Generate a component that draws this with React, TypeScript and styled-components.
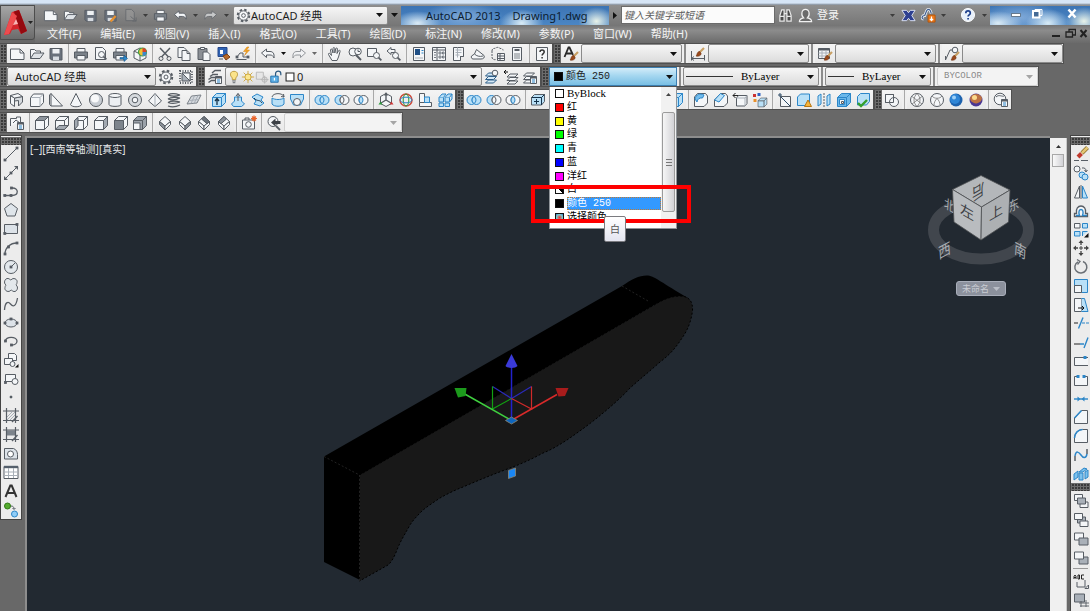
import React from 'react';
import styled, { createGlobalStyle, css } from 'styled-components';

const UI = '"Noto Sans", "Noto Sans CJK SC", sans-serif';
const MONO = '"Liberation Mono", "Noto Sans CJK SC", monospace';
const SERIF = '"Liberation Serif", "Noto Sans CJK SC", serif';

const Global = createGlobalStyle`
  *, *::before, *::after { box-sizing: border-box; }
  html, body { margin: 0; height: 100%; }
  body { background: #686868; font: 11px/16px ${UI}; color: #1c1c1c; overflow: hidden; }
  button, select, input { font: inherit; color: inherit; margin: 0; padding: 0; border: 0; background: none; }
  ul { list-style: none; margin: 0; padding: 0; }
`;

/* ---------- icon artwork, drawn on a 16 x 16 grid ---------- */

const DK = '#575d64';
const LT = '#f4f6f8';
const MID = '#a9b0b8';
const BL = '#2c86c8';
const SKY = '#b9e0f7';
const OR = '#e8902c';

const Brush = () => (
  <g>
    <path d="M15 6l-4.500 4.500" stroke="#c9a064" strokeWidth="2.200" />
    <path d="M10.800 9.500c-2 0-2.500 1.500-3 3.200-.2.800-.8 1.300-.8 1.300 2 .5 4.600.2 5.200-2.200z" fill="#9a4a1c" stroke="#6e3010" strokeWidth=".6" />
  </g>
);
const Mag = ({ x = 10, y = 10, r = 3 }: { x?: number; y?: number; r?: number }) => (
  <g>
    <circle cx={x} cy={y} r={r} fill={LT} />
    <path d={`M${x + r * 0.7} ${y + r * 0.7}l2.800 2.800`} strokeWidth="1.800" />
  </g>
);
const Printer = () => (
  <g>
    <path d="M4 6V2.500h8V6" fill={LT} />
    <path d="M1.500 6h13v6h-13z" fill="#7b828a" />
    <path d="M4 9.500h8v4.500H4z" fill={LT} />
  </g>
);
const Disk = () => (
  <g>
    <path d="M2 2.500h12v11.500H3.500L2 12.500z" fill="#69717c" />
    <path d="M4.500 3h7v4.500h-7z" fill="#eef1f4" stroke="none" />
    <path d="M5 10.500h6V14H5z" fill="#d7dce2" stroke="none" />
  </g>
);
const Layers = ({ f = LT, s = DK }: { f?: string; s?: string }) => (
  <g fill={f} stroke={s}>
    <path d="M1.500 14l3-3h8l-3 3z" />
    <path d="M1.500 10.500l3-3h8l-3 3z" />
    <path d="M1.500 7l3-3h8l-3 3z" />
  </g>
);
const Panel = () => (
  <g>
    <path d="M8.500 7.500h6v7h-6z" fill={LT} />
    <path d="M8.500 8.500h6" strokeWidth="2" />
    <path d="M10 11h3M10 13h3" stroke={BL} />
  </g>
);
const Cube = ({ c = LT, s = DK, front, top, side, left, bottom }: { c?: string; s?: string; front?: string; top?: string; side?: string; left?: string; bottom?: string }) => (
  <g stroke={s} strokeLinejoin="round">
    <path d="M1.500 5.500h9v9h-9z" fill={front || c} />
    <path d="M1.500 5.500l4-4h9l-4 4z" fill={top || c} />
    <path d="M10.500 5.500l4-4v9l-4 4z" fill={side || c} />
    {left && <path d="M1.500 5.500l3.500-3v8l-3.500 4z" fill={left} />}
    {bottom && <path d="M1.500 14.500l3.500-4h9l-3.500 4z" fill={bottom} />}
  </g>
);
const Rings = ({ a, b, m }: { a: string; b: string; m: string }) => (
  <g>
    <circle cx="5.500" cy="8" r="4.500" fill={a} stroke={a === LT ? DK : BL} />
    <circle cx="10.500" cy="8" r="4.500" fill={b} stroke={b === LT ? DK : BL} />
    <path d="M8 4.300c2.600 2 2.600 5.400 0 7.400-2.600-2-2.600-5.400 0-7.400z" fill={m} stroke={m === LT ? DK : BL} />
  </g>
);
const Iso = ({ l, r, t }: { l: string; r: string; t: string }) => (
  <g strokeLinejoin="round">
    <path d="M8 1.500l5.500 5L8 11 2.500 6.500z" fill={t} />
    <path d="M2.500 6.500L8 11v4L2.500 9.500z" fill={l} />
    <path d="M13.500 6.500L8 11v4l5.500-5.500z" fill={r} />
  </g>
);
const Node = ({ x, y }: { x: number; y: number }) => <rect x={x - 1} y={y - 1} width="2" height="2" fill={DK} strokeWidth=".8" />;
const Frame = ({ children }: { children: React.ReactNode }) => (
  <g>
    {children}
    <path d="M3.500 0v15M12.500 0v15M0 3h16M0 12.500h16" strokeWidth="1.200" />
    <path d="M9 14l5.500-6" strokeWidth="1.400" />
  </g>
);

const art: Record<string, React.ReactNode> = {
  new: <g><path d="M1.500 3h9.500l4 4v6.500H1.500z" fill={LT} /><path d="M11 3v4h4" /></g>,
  open: <g><path d="M1.500 12.500v-9h4l1.500 1.500h4.500v2" fill={LT} /><path d="M1.500 12.500L5 7h10l-4 5.500z" fill="#dfe3e7" /></g>,
  save: <Disk />,
  saveas: <g><Disk /><path d="M8 14.500l5.500-6" stroke={OR} strokeWidth="2.400" /></g>,
  web: <g><path d="M3 1.500h6l3 3v9H3z" fill="#9b9b9b" /><path d="M8 9l6 5M14 10v4h-4" /></g>,
  print: <Printer />,
  preview: <g><path d="M2.500 1.500h7l3 3v9h-10z" fill={LT} /><Mag x={8.500} y={8.500} /></g>,
  publish: <g><Printer /><path d="M8 12.500h4v-2.500l3.500 3.500-3.500 3v-2.500H8z" fill={BL} stroke="#14568a" strokeWidth=".6" transform="translate(0 -1)" /></g>,
  dwf: <g><path d="M2 5l6-3 6 3v7l-6 3-6-3z" fill={LT} /><path d="M2 5l6 3v7" /><circle cx="10.500" cy="6" r="4" fill="#f2c230" stroke="#3da04a" strokeWidth="1.200" /><path d="M10.500 6V2a4 4 0 0 1 4 4z" fill="#d8432c" stroke="none" /><path d="M10.500 6h4a4 4 0 0 1-4 4z" fill="#3b87cf" stroke="none" /></g>,
  cut: <g><path d="M3 2l8.500 9M13 2L4.500 11" strokeWidth="1.500" /><circle cx="4" cy="12.500" r="2" /><circle cx="12" cy="12.500" r="2" /></g>,
  copy: <g><path d="M2 1.500h6l2 2v8H2z" fill={LT} /><path d="M6 4.500h5l3 3v7H6z" fill={LT} /><path d="M11 4.500v3h3" /></g>,
  paste: <g><path d="M2 2.500h9v11H2z" fill="#8b8f95" /><path d="M4.500 1.500h4v2h-4z" fill={LT} /><path d="M7 6h4.500l2.500 2.500v6H7z" fill={LT} /></g>,
  match: <g><path d="M2 1.500h9v9H2z" fill="#2f63b4" stroke="#24468a" /><path d="M4 4h3v4H4z" fill="#fff" stroke="none" /><path d="M7 10l3 4 4-3-3-3z" fill="#b86a2b" stroke="#7c3f12" /><path d="M3 13h4" /></g>,
  blockedit: <g><path d="M1.500 13.500h10M2 11l3-4h3v4h5" /><Node x={2} y={11} /><Node x={13} y={11} /><path d="M12 1L8.500 5.500h3L9.500 9.500l5-5.500h-3L14 1z" fill="#f5a623" stroke="#d07e10" strokeWidth=".5" /></g>,
  undo: <path d="M1.500 7L6.500 3v2.500h3.500c3 0 4.500 2 4 6.500-.8-2.200-2-3-4-3H6.500v2.500z" fill={LT} strokeLinejoin="round" />,
  redo: <path d="M14.500 7l-5-4v2.500H6c-3 0-4.500 2-4 6.500.8-2.200 2-3 4-3h3.500v2.500z" fill={LT} strokeLinejoin="round" />,
  pan: <path d="M5 14.500L1.500 8.500c-.5-1.200 1-1.800 1.700-.6L4.500 9.500 3.500 4c0-1.200 1.500-1.300 1.800 0L6 7V2.500c0-1.300 1.700-1.300 1.800 0V7l.9-4.200c.3-1.200 1.800-1 1.700.2L10 7.500l1.500-2.800c.6-1 1.900-.4 1.600.7L11.500 11l-1.500 3.500z" fill={LT} />,
  zoomrt: <g><circle cx="6" cy="6" r="4" fill={LT} /><path d="M9 9l5 5" strokeWidth="2" /><circle cx="11" cy="5.500" r="3.300" fill={LT} /><path d="M11 3.500v2h2" /></g>,
  zoomwin: <g><path d="M1.500 2.500h9v8h-9z" fill={LT} /><Mag x={10.500} y={9.500} r={3} /></g>,
  zoomprev: <g><path d="M1 5l4-3.500v2h4v3H5v2z" fill={LT} /><Mag x={9.500} y={9.500} r={3} /></g>,
  properties: <g><path d="M2.500 1.500h11v13h-11z" fill={LT} /><path d="M4 3h5v6H4z" fill="#1f4f86" stroke="none" /><path d="M10.500 4.500h2M10.500 7h2" stroke={BL} /><path d="M4 12h8" stroke={MID} /></g>,
  dcenter: <g><path d="M1.500 1.500h13v13h-13z" fill={LT} /><path d="M6 1.500v13M1.500 4h13" /><path d="M3 6.500h2M3 9h2M3 11.500h2M8 6h2v2H8zM11.500 6h1.500v2h-1.500zM8 10h2v2H8zM11.500 10h1.500v2h-1.500z" strokeWidth=".8" /></g>,
  palettes: <g><path d="M3.500 1.500h10v9h-3v4h-7z" fill={LT} /><path d="M5.500 4h6M5.500 6.500h6M5.500 9h4M7.500 1.500v10" stroke={MID} /><path d="M13.500 10.500h-3v4" /></g>,
  sheets: <g><path d="M1.500 10l3-2 2-4.500L14 9.500c1 2-.5 3.500-3 3.500H3c-1.500 0-2-2-1.500-3z" fill={LT} /><path d="M4.500 8c2 2 5 3 8.500 2" /></g>,
  markup: <g><path d="M2 5c0-2 1.500-3 3-2.500C6.500 1 9 1 10 2.500c2-.5 3.500 1 3 3" strokeDasharray="2 1" /><path d="M2 5v6c0 2 1.500 3 4 2.500" strokeDasharray="2 1" /><path d="M7.500 7.500h7v7h-7z" fill={LT} /><path d="M7.500 10h7M7.500 12.500h7M10 7.500v7" /></g>,
  calc: <g><path d="M3.500 1.500h9v13h-9z" fill={LT} /><path d="M5.500 4h5" strokeWidth="2" /><path d="M5.500 8h5M5.500 10h5M5.500 12h5" strokeDasharray="1 1" strokeWidth="1.400" /></g>,
  help: <g><path d="M2.500 1.500h11v13h-11z" fill={LT} /><path d="M6 6c0-2.600 4.200-2.600 4.200 0 0 1.600-2.100 1.600-2.100 3.600M8.100 11v1.500" strokeWidth="1.500" stroke="#333" /></g>,
  textstyle: <g><path d="M1.500 11L5.500 1.500h1L10 9M3 7.500h5.500" stroke="#2a2a2a" strokeWidth="1.800" /><Brush /></g>,
  dimstyle: <g><path d="M1.500 5v9.500M14.500 9v5.500M1.500 12.500h13M4 10.500l-2.500 2L4 14.500" /><g transform="translate(-1 -4)"><Brush /></g></g>,
  tablestyle: <g><path d="M1.500 2.500h11v10h-11z" fill={LT} /><path d="M1.500 3.500h11" strokeWidth="2" /><path d="M1.500 7h11M1.500 10h11M5 4v8M9 4v8" stroke={MID} /><Brush /></g>,
  leaderstyle: <g><path d="M1.500 14V10M1.500 14L6 4h3" /><circle cx="11" cy="4" r="2.800" fill={LT} /><Brush /></g>,
  gear: <g><circle cx="8" cy="8" r="6.200" strokeDasharray="2.600 2.270" strokeWidth="2" /><circle cx="8" cy="8" r="5" fill={LT} /><circle cx="8" cy="8" r="2" /></g>,
  wssave: <g><path d="M2 2h12v12H2z" strokeDasharray="1 1.500" strokeWidth="2" /><path d="M4 4h8v8H4z" fill={MID} /><path d="M4 4l8 8V4z" fill={LT} /></g>,
  layerprops: <g><path d="M5 4l3-2.500h6M3 7.500l3-2h5M1.500 10.500l3-2h4M1.500 13.500l3-2h4" strokeWidth="1.400" /><Panel /></g>,
  bulb: <g><path d="M8 1.500c5 0 5 5 2 7.500v2H6V9C3 6.500 3 1.500 8 1.500z" fill="#fbe38a" stroke="#b79538" /><path d="M6 12.500h4M6.500 14.500h3" /></g>,
  sun: <g stroke="#c9a134"><path d="M8 1v14M1 8h14M3 3l10 10M13 3L3 13" /><circle cx="8" cy="8" r="3.500" fill="#fbe68f" /></g>,
  freeze: <g stroke="#b5b5b5"><path d="M1.500 2.500h8v8h-8z" fill="#e6e6e6" /><circle cx="11" cy="11" r="3" fill="#dadada" /><path d="M11 6.500v9M6.500 11h9" /></g>,
  lock: <g><path d="M7.500 7V4c0-3.500 6-3.500 6 0v2" stroke="#2d5a80" strokeWidth="1.400" /><path d="M2 7h8.500v7H2z" fill="#63b3e8" stroke="#1c6ca8" /><path d="M6.200 9v3" stroke="#fff" strokeWidth="1.400" /></g>,
  swatch: <path d="M3.500 3.500h9v9h-9z" fill="#fff" stroke="#222" strokeWidth="1.200" />,
  laycur: <g><Layers s="#2f5f88" f="#d5e9f7" /><circle cx="11" cy="4" r="2.800" fill={LT} /></g>,
  layprev: <g><g transform="translate(2.500 1)"><Layers /></g><path d="M5 3H1M3 1L1 3l2 2" stroke="#111" /></g>,
  laystate: <g><Layers /><Panel /></g>,
  polysolid: <g strokeLinejoin="round"><path d="M1.500 3.500l4 2.500v8.500l-4-3z" fill={LT} /><path d="M5.500 6l8-1.500V10l-4 4V8.500l-4 .5z" fill="#d6dade" /><path d="M1.500 3.500L9 1.500l4.500 3L5.500 6z" fill={LT} /></g>,
  box: <g strokeLinejoin="round"><path d="M1.500 5.500l3-3.500h10v8.500l-3.500 4H1.500z" fill={LT} /><path d="M1.500 5.500h9.500v9M11 5.500L14.500 2" stroke={MID} /></g>,
  wedge: <g><path d="M3 1.500L14.500 14H3z" fill={LT} /><path d="M3 1.500L1.500 3v9.500L3 14" /></g>,
  cone: <path d="M8 1.500l5.500 11c-1 3-10 3-11 0z" fill={LT} strokeLinejoin="round" />,
  sphere: <g><circle cx="8" cy="8" r="6.500" fill="#c8cdd3" /><circle cx="7" cy="6.500" r="4" fill="#f8f9fa" stroke="none" /></g>,
  cyl: <g><path d="M2 3.500v9c0 2.500 12 2.500 12 0v-9" fill="#eceff2" /><ellipse cx="8" cy="3.500" rx="6" ry="2" fill={LT} /></g>,
  torus: <g><circle cx="8" cy="8" r="6.500" fill="#d6dade" /><circle cx="8" cy="8" r="2.800" fill={LT} /></g>,
  pyramid: <g strokeLinejoin="round"><path d="M8 1.500L1.500 9 8 14.500 14.500 9z" fill={LT} /><path d="M8 1.500v13" stroke={MID} /></g>,
  helix: <path d="M2 3c3-2 9-1 12 0M2 3c4 1.500 8 1.500 12 0M2 7c3-2 9-2 12-1M2 7c4 1.500 8 1 12-1M2 10.500c3-2 9-1.500 12-.5M2 10.500c4 1.500 8 1 12-.5M2 14c4 1.500 8 1 12-1" strokeWidth="1.300" />,
  planar: <g stroke="#7b8188"><path d="M1 12L5.500 4 15 3l-4 8z" fill="#d5d9de" /><path d="M3.500 8.500L13 7.500M8.500 3.800L5 11.500M12 3.500l-4 8" stroke={MID} /></g>,
  extrude: <g><Cube c={SKY} s={BL} /><path d="M6 13V7M4 9l2-2.500L8 9" stroke="#14324a" strokeWidth="1.300" /></g>,
  presspull: <g><path d="M1.500 12l3-3V5h7v4l3 3-3 2.500h-8z" fill={SKY} stroke={BL} /><path d="M8 9V1.500M6 4l2-2.500L10 4" /></g>,
  sweep: <g><path d="M2 5l5-3 6 3-2 3 3 3-4 3-6-2 2-3z" fill={SKY} stroke={BL} /><path d="M4 6c3 4 6 1 8 5" stroke="#14324a" /></g>,
  revolve: <g><path d="M2 6v6c2 3 10 3 12 0V6c-3 2-9 2-12 0z" fill={SKY} stroke={BL} /><path d="M2 5c1-4.500 11-4.500 12 0M14 5l-.5-3M14 5l-3-.5" /></g>,
  loft: <g><path d="M1.500 2.500h13V7l-3 6h-7l-3-6z" fill={SKY} stroke={BL} /><circle cx="8" cy="10" r="3.500" fill={LT} /></g>,
  union: <Rings a={SKY} b={SKY} m={SKY} />,
  subtract: <Rings a={SKY} b={LT} m={LT} />,
  intersect: <Rings a={LT} b={LT} m={SKY} />,
  move3d: <g><path d="M8 1.500l5.500 3v7L8 14.500l-5.500-3v-7z" fill={LT} /><path d="M8 8V2M8 8l5 3M8 8l-5 3" strokeWidth="1.400" /><path d="M8 0L6 3.500h4z" fill={DK} stroke="none" /><path d="M15.500 12.500l-4 0 2-3z" fill="#c33" stroke="none" /><path d="M.5 12.500l4 0-2-3z" fill="#2a9a3a" stroke="none" /></g>,
  rotate3d: <g><circle cx="8" cy="8" r="6" stroke="#d04a3a" strokeWidth="1.500" /><ellipse cx="8" cy="8" rx="2.800" ry="6" stroke="#2a9a3a" /><ellipse cx="8" cy="8" rx="6" ry="2.800" stroke={BL} /></g>,
  align3d: <g><path d="M2.500 1.500h5v9h-5z" fill={LT} /><path d="M2.500 10.500h12v4h-12z" fill={LT} /><path d="M7.500 5h5v5.500h-5z" fill={SKY} stroke={BL} /></g>,
  array3d: <g><path d="M2 5.500h4.500V10H2zM8 5.500h4.500V10H8zM2 11h4.500v3.500H2zM8 11h4.500v3.500H8z" fill={SKY} stroke={BL} /><path d="M2 5.500l3-3.500h4L6.500 5.500M8 5.500L11 2h4l-2.500 3.500M12.500 10L15 7V2" fill={SKY} stroke={BL} /></g>,
  faceext: <g><path d="M1.500 5.500l3-3h10v7l-3 3.500h-10z" fill={SKY} stroke={DK} /><path d="M1.500 5.500h10v7.500M11.500 5.500l3-3M6.500 7v5M4 9.500h5" stroke="#14324a" /></g>,
  imprint: <g><Cube c={SKY} s={BL} /><path d="M3.500 8h5v4h-5z" fill={LT} /></g>,
  filletedge: <g><path d="M1.500 5l3-3.500h8L14.500 4v7l-3.500 3.500H1.500z" fill={LT} /><path d="M2 7c1-5 5-6 9-4l-1.500 3C7 5.500 4 7 4 10z" fill="#74bdec" stroke={BL} /></g>,
  chamferedge: <g><path d="M1.500 8l6-6.500h5L14.500 4v7l-3.500 3.500H1.500z" fill={LT} /><path d="M1.500 8l6-6.500 4 2L6 10z" fill={SKY} stroke={BL} /></g>,
  coledge: <g><path d="M1 3.500h6M3.500 1L1 3.500 3.500 6" stroke="#222" /><path d="M4.500 6l2-2.500h8.500v8l-2 2.500H4.500z" fill={LT} /><path d="M4.500 6h8.500v8M13 6l2-2.500" stroke={MID} /></g>,
  colface: <g><path d="M1 2h3v3H1z" fill="#c33" stroke="none" /><path d="M5.500 1h3v3h-3z" fill="#2f62c4" stroke="none" /><path d="M1.500 7h3v3h-3z" fill={OR} stroke="none" /><g transform="translate(5 5) scale(.68)"><Cube c={SKY} /></g></g>,
  clean: <g><path d="M3.500 4.500h10v10h-10z" fill={LT} /><path d="M3.500 4.500l10 10M1 3h4M3 1v4" stroke="#2c4a66" /></g>,
  solidwarn: <g><path d="M1.500 5l3-3h9v8l-3 3.500h-9z" fill={SKY} stroke={BL} strokeLinejoin="round" /><path d="M12 8l3.500 6.500h-7z" fill="#f6b53c" stroke="#b97510" /></g>,
  separate: <g><path d="M2 4l3-2v10l-3 2zM11 4l3-2v10l-3 2z" fill={SKY} stroke={BL} /><path d="M8 1v14" strokeDasharray="2 1" /></g>,
  shell: <g><Cube c="#6ab7ea" s={BL} /><path d="M3.500 7.500h5v5h-5z" fill={LT} stroke={BL} /><path d="M5.500 9.500h2v2h-2z" /></g>,
  check: <g><path d="M2.500 4.500l3-3h9v8l-3 3.500h-9z" fill={SKY} stroke={BL} strokeLinejoin="round" /><path d="M3 11l3 3 6-6" stroke="#33a02c" strokeWidth="2.400" /></g>,
  vs2d: <g><path d="M1.500 2.500h8v8h-8z" fill={LT} /><circle cx="10" cy="10" r="4.500" fill={LT} /><path d="M1.500 2.500h8v8h-8z" /></g>,
  wire: <g><circle cx="8" cy="8" r="6.500" fill={LT} /><path d="M3 4.500l10 7.500M13 4.500L3 12M8 1.500c-4 4-4 9 0 13M8 1.500c4 4 4 9 0 13" stroke="#777" strokeWidth=".8" /></g>,
  hidden: <g><circle cx="8" cy="8" r="6.500" fill={LT} /><path d="M3 4c2 3 8 3 10 0M8 6.500c-2 2-3 4-3 7M8 6.500c2 2 3 4 3 7" stroke="#777" strokeWidth=".8" /></g>,
  real: <g stroke="none"><circle cx="8" cy="8" r="6.500" fill="#1d62ad" /><circle cx="7" cy="7" r="5" fill="#2f86d6" /><circle cx="6" cy="5.500" r="2" fill="#9fd0f6" /></g>,
  concept: <g stroke="none"><circle cx="8" cy="8" r="6.500" fill="#4a3794" /><path d="M2 6a6.500 6.500 0 0 1 12 0c0 3-2.500 5-6 5.500C4.500 11 2 9 2 6z" fill="#d9812e" opacity=".8" /><circle cx="6.500" cy="5.500" r="2.500" fill="#fbd98c" /></g>,
  vsmanage: <g><circle cx="7" cy="7" r="5.800" fill={LT} /><path d="M3 5c3-3 6 0 8-1" /><Panel /></g>,
  namedview: <g><path d="M1.500 11V3.500h6V2h4v5" fill={LT} /><path d="M4 8l3-3 4 3" /><Panel /></g>,
  vtop: <Cube top="#8e959d" />,
  vbottom: <Cube bottom="#a2a9b1" />,
  vleft: <Cube left="#a2a9b1" />,
  vright: <Cube side="#a2a9b1" />,
  vfront: <Cube front="#7d848c" />,
  vback: <g><Cube front="#9aa1a9" top="#9aa1a9" side="#9aa1a9" /><path d="M1.500 8h6.500v6.500H1.500z" fill={LT} /></g>,
  isosw: <Iso l="#8c939b" r={LT} t={LT} />,
  isose: <Iso l={LT} r="#8c939b" t={LT} />,
  isone: <g><Iso l={LT} r={LT} t={LT} /><path d="M8 1.500l5.500 5-2.500 2.200L5.500 4z" fill="#6c737b" /></g>,
  isonw: <g><Iso l={LT} r={LT} t={LT} /><path d="M8 1.500l-5.500 5L5 8.700 10.500 4z" fill="#8c939b" /></g>,
  camera: <g><path d="M1.500 5h12v9h-12z" fill={LT} /><path d="M4 5V3h4v2" /><circle cx="7.500" cy="9.500" r="2.800" /><path d="M13 .5v6M10 3.500h6M11 1.500l4 4M15 1.500l-4 4" stroke="#e8642c" strokeWidth="1.200" /></g>,
  ucsprev: <g><circle cx="7" cy="6.500" r="5" fill={LT} /><path d="M5 7.500l4.500-4v2.500h5v3h-5v2.500z" fill="#3c4046" stroke="none" /><path d="M10 11l4 4" strokeWidth="1.800" /></g>,
  line: <g><path d="M2 14L14 2" /><Node x={2} y={14} /><Node x={14} y={2} /></g>,
  xline: <g><path d="M1 15L15 1" /><path d="M1 15v-4l4 4zM15 1v4l-4-4z" fill={DK} stroke="none" /><Node x={8} y={8} /></g>,
  pline: <g><path d="M1.500 11.500H9c7 0 7-8 0-7.500" strokeWidth="1.300" /><Node x={1.800} y={11.500} /><Node x={8} y={11.500} /><Node x={8.500} y={4} /></g>,
  polygon: <path d="M8 1.500l6.500 5L12 14H4L1.500 6.500z" fill="#dfe5ea" />,
  rect: <g><path d="M1.500 3.500h13v9h-13z" fill="#dce2e8" /><Node x={1.800} y={12.500} /><Node x={14} y={3.500} /></g>,
  arc: <g><path d="M2 14C2 8 7 3 14 3" strokeWidth="1.300" /><Node x={2} y={14} /><Node x={5.500} y={7} /><Node x={14} y={3} /></g>,
  circle: <g><circle cx="8" cy="8" r="6.500" fill="#e3e8ec" /><path d="M8 8l4-4" /><Node x={8} y={8} /></g>,
  cloud: <path d="M8 3c2-3 7-1 6 2.500 0 1.500-1 2-1 2.500 3 2 1 7-2 6.500C9.500 14.500 9 13 8 13c-2 3-7 1-6-2.500C2 9 3 8.500 3 8 0 6 2 1 5 1.500 6.500 1.500 7 3 8 3z" fill="#e3e8ec" />,
  spline: <path d="M1.500 14C2 6 5 5 7.500 8S13 11 14.500 2" strokeWidth="1.300" />,
  ellipse: <g><ellipse cx="8" cy="8" rx="6" ry="4" fill="#dce2e8" /><Node x={2} y={8} /><Node x={14} y={8} /><Node x={8} y={4} /></g>,
  earc: <g><path d="M2.500 8C2 3.500 14 3 14 8c0 2-2 4-5 4" strokeWidth="1.300" /><Node x={2.500} y={8} /><Node x={8.500} y={12} /></g>,
  insblock: <g><path d="M5.500 1.500h6l2 2v5h-8z" fill={LT} /><path d="M1.500 6.500h8v6h-8z" fill={LT} /><circle cx="9.500" cy="12" r="2.500" fill={LT} /><path d="M12 15.500h3.500V12z" fill="#111" stroke="none" /></g>,
  mkblock: <g><path d="M2.500 3.500h10v7h-10z" fill={LT} /><circle cx="12" cy="10.500" r="3" fill={LT} /><Node x={2.500} y={11.500} /></g>,
  point: <path d="M7 7h2v2H7z" fill={DK} stroke={DK} strokeWidth=".5" />,
  hatch: <Frame><path d="M4 9l5-5M4 12l8-8M7 12l5-5" stroke={MID} /></Frame>,
  gradient: <Frame><path d="M4 3.500h8v5H4z" fill="#7c838b" stroke="none" /></Frame>,
  region: <g><path d="M1.500 2.500h9c3 1 4 4 4 6v4.500h-13z" fill="#dce2e8" /><circle cx="7.500" cy="8" r="3" fill="#fff" /></g>,
  table: <g><path d="M1 2.500h14v12H1z" fill="#fff" /><path d="M1 3h14" strokeWidth="2.400" stroke="#55606c" /><path d="M1 8h14M1 11.500h14M5.500 4v10M10.500 4v10" stroke={MID} /></g>,
  mtext: <path d="M2.500 14L7.300 2.500h1.400L13.500 14M4.500 10h7" stroke="#333" strokeWidth="2" />,
  addsel: <g><circle cx="4.500" cy="4" r="3" fill="#55ab2f" stroke="#2e7a14" /><circle cx="11.500" cy="12" r="3" fill="#8fcdf8" stroke={BL} /><path d="M8 4c2 0 3 1 3 3M9.500 6l1.500 1.500L12.500 6" /></g>,
  erase: <g><path d="M14.500 1.500L9 7" stroke="#8a6d2c" strokeWidth="4" /><path d="M14.500 1.500L9 7" stroke="#e3c673" strokeWidth="2.500" /><path d="M8.500 7.500L5 11" stroke="#c0392b" strokeWidth="4" /><path d="M1 14.500h5M8 14.500h7" /></g>,
  copyobj: <g><circle cx="4" cy="4" r="3" fill={LT} /><path d="M9 3c3-.5 4 1 4 3M11.500 5l1.500 2 1.500-2" /><circle cx="9" cy="10" r="3" fill={SKY} stroke={BL} /><circle cx="12" cy="12" r="3" fill={SKY} stroke={BL} /></g>,
  mirror: <g><path d="M6.500 2v12h-5z" fill={LT} /><path d="M9.500 2v12h5z" fill={SKY} stroke={BL} /><path d="M8 1v14" /></g>,
  offset: <g><path d="M1.500 13.500v-3h2c-2-10 11-10 9 0h2v3z" fill={LT} strokeWidth="1.300" /><path d="M3 12.500h3.500c-3-8 6-8 3 0H14" stroke={BL} strokeWidth="1.400" /></g>,
  array: <g><path d="M1.500 1.500H7V6H1.500z" fill={LT} /><path d="M9.500 1.500h5V6h-5zM1.500 9.500H7V14H1.500zM9.500 14V9.500h5" fill={SKY} stroke={BL} /><path d="M15.500 11v4.500H11z" fill="#111" stroke="none" /></g>,
  move: <g stroke="#444"><path d="M8 2v3M8 11v3M2 8h3M11 8h3" strokeWidth="1.300" /><path d="M8 0l2.500 3h-5zM8 16l2.500-3h-5zM0 8l3-2.500v5zM16 8l-3-2.500v5z" fill="#444" stroke="none" /><path d="M7 7h2v2H7z" /></g>,
  rotate: <g stroke="#6a6f75"><path d="M10 2.500a6 6 0 1 1-5 .3" strokeWidth="1.500" /><path d="M4 .5l3 2-2.500 3" strokeWidth="1.300" /></g>,
  scale: <g><path d="M1.500 1.500h13v13h-13z" fill={SKY} stroke={BL} /><path d="M1.500 7.500h7v7h-7z" fill={LT} /></g>,
  stretch: <g><path d="M1.500 1.500h7v13h-7z" fill={LT} /><path d="M8.500 1.500h3l3.500 13H8.500" fill={SKY} stroke={BL} /><path d="M5 11h6M9 9l2 2-2 2" stroke="#111" /></g>,
  trim: <g><path d="M1 8h4" stroke="#222" /><path d="M10 2.500L5.500 13.500" stroke={BL} strokeWidth="1.400" /><path d="M9 8h7" stroke={BL} strokeDasharray="3 1" /></g>,
  extend: <g><path d="M1 10h6" stroke="#222" /><path d="M7 10h4M15 3.500L11 14" stroke={BL} strokeWidth="1.400" /></g>,
  breakpt: <g><path d="M15 4.500H1.500v8H15" fill={LT} /><path d="M10.500 3h3v3h-3z" fill={BL} stroke="none" /></g>,
  break: <g><path d="M4.500 4.500h-3v9h13v-9h-3" fill={LT} /><path d="M3.500 3h3v3h-3zM9.500 3h3v3h-3z" fill={BL} stroke="none" /></g>,
  join: <g stroke={BL}><path d="M1 8h14" strokeWidth="1.400" /><path d="M4.500 5.500L7.500 8l-3 2.500zM11.500 5.500L8.500 8l3 2.500z" fill={BL} stroke="none" /></g>,
  chamfer: <g><path d="M1.500 14.500V9l7-7.500h6v13z" fill={LT} /><path d="M1.500 9l7-7.500" stroke={BL} strokeWidth="1.500" /></g>,
  fillet: <g><path d="M1.500 14.500V10c0-5 4-8.500 8-8.500h5v13z" fill={LT} /><path d="M1.500 10c0-5 4-8.500 8-8.500" stroke={BL} strokeWidth="1.500" /></g>,
  blend: <g><path d="M2 14V9M14 2v5" strokeWidth="1.500" /><path d="M2 9c1-6 4-4 6-1s5 4 6-1" stroke={BL} strokeWidth="1.500" /></g>,
  explode: <g><path d="M1 8l4-3v6l-4 3zM6 6l5-4 3 1-4 3zM6 7h4v7H6zM12 6l3-2v7l-3 2z" fill="#7cc2ee" stroke={BL} /></g>,
  front1: <g><path d="M1.500 1.500h8v6h-8z" fill={LT} /><path d="M7 9h8v5.500H7z" fill={LT} /><path d="M4.500 5h8v6h-8z" fill={MID} /></g>,
  front2: <g><path d="M4.500 5h8v6h-8z" fill={MID} /><path d="M1.500 1.500h8v6h-8z" fill={LT} /><path d="M7 9h8v5.500H7z" fill={LT} /></g>,
  front3: <g><path d="M1.500 2h9v7h-9z" fill={LT} /><path d="M6 7h9v7H6z" fill={MID} /></g>,
  front4: <g><path d="M6 7h9v7H6z" fill={MID} /><path d="M1.500 2h9v7h-9z" fill={LT} /></g>,
  bringtext: <g><path d="M1 6V3.500l1-1.500 1 1.500V6M1 4.500h2M5 6V2h1.500v4zM8.500 6V2H11M8.500 6H11" stroke="#222" /><path d="M4 9v5h8V7M12 15.500h3.500V12z" /></g>,
  hatchback: <g><path d="M1.500 2h10v8h-10z" fill={MID} /><path d="M8 9v6M13 8v7M6 11h10M7 14h9" strokeWidth=".9" /></g>,
  search: <g stroke="#e8e8e8" strokeWidth="1.300"><path d="M2 14V8l2-6h2.500v12zM14 14V8l-2-6H9.500v12zM6.500 6h3M2 9h4.500M9.500 9H14" fill="#4b4b4b" /></g>,
  user: <g stroke="#f1f1f1" strokeWidth="1.300"><path d="M1.500 14.500c0-3 2-3.500 4.500-4C3 8 3.500 1.500 8 1.500S13 8 10 10.500c2.500.5 4.500 1 4.500 4z" fill="#6b6b6b" /></g>,
  exchange: <g strokeLinejoin="round"><path d="M1 2.500h5L8 5l2-2.500h5L11.500 8l3.500 5.500h-5L8 11l-2 2.500H1L4.500 8z" fill="#2d3f90" stroke="#dfe5f5" strokeWidth="1" /></g>,
  connect: <g><path d="M3 12c-3-1-2-4 1-4l2-5c1-2 3-2 4 0l1 3" stroke="#e9eef5" strokeWidth="3" /><path d="M3 12c-3-1-2-4 1-4l2-5c1-2 3-2 4 0l1 3" stroke="#3c5b8d" strokeWidth="1.200" /><path d="M7.500 7.500H15V15H7.500z" fill="#ee7a1b" stroke="#b3540a" /><path d="M11.200 9v4M9.500 11.500l1.700 2 1.700-2" stroke="#fff" strokeWidth="1.300" /></g>,
  about: <g><circle cx="8" cy="8" r="6.500" fill="#e8f0fa" stroke="#fff" /><path d="M5.800 6.200c0-3 4.500-3 4.500 0 0 1.700-2.200 1.700-2.200 3.300M8.100 11v1.600" strokeWidth="1.700" stroke="#1d3f8c" /></g>,
};

const Svg = styled.svg<{ $s: number }>`
  display: block;
  flex: none;
  width: ${p => p.$s}px;
  height: ${p => p.$s}px;
`;
const Icon = ({ name, size = 16 }: { name: string; size?: number }) => (
  <Svg $s={size} viewBox="0 0 16 16" fill="none" stroke={DK} aria-hidden>{art[name]}</Svg>
);
const Tri = ({ color = '#111', up = false, w = 7 }: { color?: string; up?: boolean; w?: number }) => (
  <svg width={w} height={w === 7 ? 4 : 3} viewBox="0 0 7 4" aria-hidden><path d={up ? 'M0 4h7L3.500 0z' : 'M0 0h7L3.500 4z'} fill={color} /></svg>
);
const SmallTri = () => <Tri color="#3c3c3c" w={5} />;

/* ---------- shell ---------- */

const Window = styled.div`
  display: flex;
  flex-direction: column;
  height: 100vh;
  min-height: 520px;
  overflow: hidden;
`;
const GlassEdge = styled.div`
  height: 5px;
  flex: none;
  background: linear-gradient(#d6e5f6 60%, #7d8793);
`;
const Top = styled.header`
  display: flex;
  flex: none;
`;
const AppButton = styled.button`
  display: flex;
  align-items: center;
  width: 35px;
  height: 35px;
  padding-left: 3px;
  gap: 1px;
  background: linear-gradient(#a6a6a6, #6b6b6b);
  border: 1px solid #4d4d4d;
  border-radius: 0 0 3px 0;
`;
const TopRows = styled.div`
  flex: 1;
  min-width: 0;
`;
const TitleBar = styled.div`
  display: flex;
  align-items: center;
  height: 20px;
  padding-left: 5px;
  background: linear-gradient(#8f8f8f, #777);
`;
const QuickButton = styled.button<{ $w?: number; $dim?: boolean }>`
  display: flex;
  flex: none;
  align-items: center;
  justify-content: center;
  width: ${p => p.$w || 20}px;
  height: 20px;
  opacity: ${p => (p.$dim ? 0.6 : 1)};
`;
const glass = css`
  background:
    radial-gradient(ellipse 24px 12px at 8% 90%, #dcecf6, transparent),
    radial-gradient(ellipse 22px 14px at 58% 90%, #d9ecf7, transparent),
    radial-gradient(ellipse 18px 14px at 94% 80%, #e9f3e9, transparent),
    radial-gradient(ellipse 40px 16px at 30% 60%, #7fa9d8, transparent),
    linear-gradient(#3c74b4, #4b86c4);
`;
const Caption = styled.div`
  ${glass}
  display: flex;
  flex: none;
  gap: 12px;
  width: 208px;
  height: 19px;
  padding-left: 25px;
  font-size: 11px;
  line-height: 20px;
  color: #0c1c30;
  white-space: pre;
`;
const SearchBox = styled.input`
  flex: none;
  width: 154px;
  height: 18px;
  padding: 0 2px;
  background: #fbfbfb;
  border: 1px solid #6a6a6a;
  font-size: 10px;
  font-style: italic;
  &::placeholder { color: #5d5d5d; opacity: 1; }
`;
const SignIn = styled.button`
  width: 26px;
  flex: none;
  color: #f4f4f4;
  font-size: 11px;
  white-space: nowrap;
`;
const Push = styled.div`
  flex: 1;
`;
const HelpGroup = styled.div`
  display: flex;
  flex: none;
  padding-left: 10px;
`;
const WindowButtons = styled.div`
  ${glass}
  display: flex;
  flex: none;
  align-items: center;
  gap: 8px;
  width: 100px;
  height: 19px;
  padding: 0 11px 0 19px;
`;
const MenuBar = styled.nav`
  display: flex;
  align-items: center;
  gap: 19px;
  height: 18px;
  padding: 0 2px 0 12px;
  background: linear-gradient(#747474, #8c8c8c 30%, #6a6a6a);
  color: #f4f4f4;
  text-shadow: 0 0 1px #333;
`;
const MenuItem = styled.button`
  flex: none;
  line-height: 18px;
  white-space: nowrap;
`;
const DocButtons = styled.div`
  display: flex;
  gap: 3px;
  margin-left: auto;
`;

/* ---------- toolbars ---------- */

const Docks = styled.div`
  display: flex;
  flex: none;
  flex-direction: column;
  gap: 4px;
  padding: 1px 0 4px;
  background: #686868;
`;
const Row = styled.div`
  display: flex;
  gap: 2px;
`;
const Bar = styled.div`
  display: flex;
  flex: none;
  align-items: center;
  height: 19px;
  background: linear-gradient(#f4f4f4, #e8e8e8);
  box-shadow: 0 0 0 1px #505050;
`;
const Grip = styled.span<{ $wide?: boolean }>`
  flex: none;
  align-self: stretch;
  ${p => (p.$wide ? 'height: 8px;' : 'width: 7px;')}
  background:
    radial-gradient(circle at 1px 1px, #3a3a3a 1px, transparent 1px) 1px 1px / 3px 3px,
    #6c6c6c;
`;
const Group = styled.div<{ $w: number }>`
  display: flex;
  flex: none;
  width: ${p => p.$w}px;
`;
const Tool = styled.button<{ $dim?: boolean }>`
  display: flex;
  flex: 1;
  align-items: center;
  justify-content: center;
  min-width: 0;
  min-height: 0;
  height: 19px;
  opacity: ${p => (p.$dim ? 0.55 : 1)};
`;
const Divider = styled.span<{ $double?: boolean }>`
  flex: none;
  align-self: stretch;
  width: ${p => (p.$double ? 6 : 5)}px;
  border-left: 2px solid #efefef;
  border-right: 2px solid #efefef;
  background: ${p => (p.$double ? '#8c8c8c' : '#a8a8a8')};
  background-clip: padding-box;
`;
const Arrow = styled.span<{ $r?: number }>`
  position: absolute;
  right: ${p => p.$r ?? 4}px;
  top: 50%;
  display: flex;
  transform: translateY(-50%);
  pointer-events: none;
`;
const Combo = styled.span<{ $w: number; $off?: boolean; $face?: 'serif' | 'mono'; $pad?: number }>`
  position: relative;
  display: flex;
  flex: none;
  align-items: center;
  width: ${p => p.$w}px;
  height: 19px;
  padding-left: ${p => p.$pad ?? 4}px;
  border: 1px solid ${p => (p.$off ? '#d0d0d0' : '#8a8a8a')};
  border-radius: 2px;
  background: ${p => (p.$off ? '#f3f3f3' : 'linear-gradient(#f6f6f6, #dcdcdc)')};
  color: ${p => (p.$off ? '#8a8a8a' : '#1c1c1c')};
  ${p => p.$face === 'mono' && css`font-family: ${MONO}; font-size: 9px;`}
  ${p => p.$face === 'serif' && css`font-family: ${SERIF}; font-size: 11px; color: #000;`}
  select {
    flex: 1;
    min-width: 0;
    height: 17px;
    line-height: 17px;
    appearance: none;
    outline: none;
    opacity: 1;
  }
`;
const LinePreview = styled.span<{ $w: number }>`
  flex: none;
  width: ${p => p.$w}px;
  height: 1px;
  margin-right: 8px;
  background: #333;
`;

const Select = ({ label, value = '', w, off, face, pad, children }: {
  label: string; value?: string; w: number; off?: boolean; face?: 'serif' | 'mono'; pad?: number; children?: React.ReactNode;
}) => (
  <Combo $w={w} $off={off} $face={face} $pad={pad}>
    {children}
    <select aria-label={label} disabled={off}><option>{value}</option></select>
    <Arrow><Tri color={off ? '#a5a5a5' : '#111'} /></Arrow>
  </Combo>
);
const Tools = ({ w, names }: { w: number; names: string }) => (
  <Group $w={w}>
    {names.split(' ').map((n, i) => <Tool key={i} aria-label={n}><Icon name={n} /></Tool>)}
  </Group>
);

/* ---------- colour list ---------- */

const ColorPicker = styled.div`
  position: relative;
  flex: none;
  width: 128px;
  height: 19px;
`;
const ColorButton = styled.button`
  display: flex;
  align-items: center;
  gap: 3px;
  width: 100%;
  height: 19px;
  padding-left: 4px;
  border: 1px solid #3c7fb1;
  background: linear-gradient(#d3ecf9, #a5d7f0 45%, #79bfe4);
  font: 10px/17px ${MONO};
`;
const Swatch = styled.span<{ $c: string }>`
  flex: none;
  width: 9px;
  height: 9px;
  border: 1px solid #111;
  background: ${p => p.$c};
`;
const Popup = styled.div`
  position: absolute;
  z-index: 3;
  top: 20px;
  left: 0;
  display: flex;
  width: 128px;
  height: 142px;
  background: #fff;
  border: 1px solid #8f9499;
  border-top: 0;
`;
const Options = styled.ul`
  display: flex;
  flex: 1;
  flex-direction: column;
  height: 137px;
  padding-left: 5px;
`;
const Option = styled.li<{ $on?: boolean; $serif?: boolean }>`
  display: flex;
  flex: 1;
  align-items: center;
  gap: 3px;
  min-height: 0;
  color: #000;
  font: ${p => (p.$serif ? `11px/13px ${SERIF}` : `10px/13px ${MONO}`)};
  span + span {
    flex: 1;
    height: 13px;
    ${p => p.$on && css`background: #3399ff; color: #fff; outline: 1px dotted #c07a33; outline-offset: -1px;`}
  }
`;
const PopupScroll = styled.div`
  display: flex;
  flex-direction: column;
  align-items: center;
  width: 15px;
  padding-top: 6px;
  background: #f1f1f1;
`;
const PopupThumb = styled.span`
  display: flex;
  align-items: center;
  justify-content: center;
  width: 13px;
  height: 100px;
  margin-top: 16px;
  border: 1px solid #9b9b9b;
  border-radius: 2px;
  background: linear-gradient(90deg, #f6f6f6, #d2d2d6);
`;
const Highlight = styled.div`
  position: absolute;
  z-index: 4;
  top: 118px;
  left: -18px;
  width: 160px;
  height: 38px;
  border: 4px solid #fe0000;
`;
const Tip = styled.div`
  position: absolute;
  z-index: 5;
  top: 149px;
  left: 55px;
  width: 22px;
  height: 26px;
  border: 1px solid #7b7b80;
  border-radius: 2px;
  background: linear-gradient(#fff, #e4e5f0);
  color: #555;
  font-size: 10px;
  line-height: 24px;
  text-align: center;
`;

const colors: [string, string][] = [
  ['#fff', 'ByBlock'], ['#f00', '红'], ['#ff0', '黄'], ['#0f0', '绿'], ['#0ff', '青'],
  ['#00f', '蓝'], ['#f0f', '洋红'], ['linear-gradient(45deg, #fff 50%, #000 50%)', '白'], ['#000', '颜色 250'],
  ['radial-gradient(#e33, #7cc 60%, #36c)', '选择颜色'],
];

const ColorControl = () => (
  <ColorPicker>
    <ColorButton aria-haspopup="listbox" aria-expanded="true">
      <Swatch $c="#000" /><span>颜色 250</span>
      <Arrow><Tri /></Arrow>
    </ColorButton>
    <Popup>
      <Options role="listbox" aria-label="颜色">
        {colors.map(([c, name], i) => (
          <Option key={name} role="option" aria-selected={i === 8} $on={i === 8} $serif={i === 0}>
            <Swatch $c={c} /><span>{name}</span>
          </Option>
        ))}
      </Options>
      <PopupScroll>
        <Tri up color="#444" w={5} />
        <PopupThumb><svg width="6" height="7" viewBox="0 0 6 7" aria-hidden><path d="M0 .5h6M0 3.500h6M0 6.500h6" stroke="#777" /></svg></PopupThumb>
      </PopupScroll>
    </Popup>
    <Highlight />
    <Tip role="tooltip">白</Tip>
  </ColorPicker>
);

/* ---------- work area ---------- */

const Work = styled.main`
  display: flex;
  flex: 1;
  min-height: 0;
  background: #686868;
`;
const SideDock = styled.aside<{ $right?: boolean }>`
  display: flex;
  flex: none;
  flex-direction: column;
  width: ${p => (p.$right ? 19 : 20)}px;
  margin-left: ${p => (p.$right ? 4 : 1)}px;
  align-self: ${p => (p.$right ? 'stretch' : 'flex-start')};
  padding-top: 1px;
  background: #ececec;
  box-shadow: 0 0 0 1px #444;
`;
const Stack = styled.div<{ $h: number }>`
  display: flex;
  flex: none;
  flex-direction: column;
  align-items: center;
  height: ${p => p.$h}px;
`;
const StackDivider = styled.span`
  height: 1px;
  margin: 1px 2px 2px;
  background: #999;
`;
const Canvas = styled.section`
  position: relative;
  flex: 1;
  min-width: 0;
  margin-left: 4px;
  border-top: 2px solid #8d8d8d;
  border-left: 2px solid #8d8d8d;
  background: #222931;
`;
const Scene = styled.svg`
  display: block;
  width: 100%;
  height: 100%;
`;
const ViewLabel = styled.div`
  position: absolute;
  top: 3px;
  left: 3px;
  color: #e6e8ea;
  font-size: 10px;
  line-height: 16px;
`;
const CubeSvg = styled.svg`
  position: absolute;
  top: 32px;
  right: 10px;
`;
const UcsButton = styled.button`
  position: absolute;
  top: 143px;
  right: 44px;
  display: flex;
  align-items: center;
  justify-content: center;
  gap: 4px;
  width: 50px;
  height: 15px;
  border: 1px solid #a9aeba;
  border-radius: 3px;
  background: #8c919d;
  color: #c9ccd3;
  font-size: 9px;
  line-height: 13px;
`;
const Scroll = styled.div`
  display: flex;
  flex: none;
  flex-direction: column;
  align-items: center;
  width: 17px;
  margin-top: 2px;
  padding-top: 7px;
  background: #f0f0f0;
  border-right: 1px solid #c9c9c9;
`;
const ScrollThumb = styled.span`
  width: 12px;
  height: 13px;
  margin-top: 6px;
  border: 1px solid #a8a8a8;
  background: linear-gradient(90deg, #fafafa, #d2d2d6);
`;

const FRONT = 'M359.500 475L656 304C664 299 672 296 681 296C690 297 693 302 692.500 311C690 328 684 335 680 341C674 350 668 356 660 362C650 371 640 379 630 388C620 399 608 409 597 418C587 426 577 433 567 440C559 445 551 450 543 453C532 459 521 464 510 468C494 474 479 480 463 487C455 490 447 494 440 498C434 502 428 506 423 510C418 515 413 520 410 525C406 532 403 537 400 543C397 549 394 560 388 565L359.500 581Z';

const Model = () => (
  <Scene viewBox="27 138 1023 473" preserveAspectRatio="xMidYMid slice" aria-label="模型">
    <path d="M324 456.500L622 286C632 279 640 275 648 275.500C656 277 662 283 688 298L656 304L361 476V580.500L324 562Z" fill="#000" />
    <path d={FRONT} fill="#181818" stroke="#000" strokeDasharray="2 2" />
    <path d="M324 456.500l35.500 18.500V581M622 286l26 15" fill="none" stroke="#222" strokeDasharray="2 2" />
    <g fill="none" strokeWidth="1.200">
      <path d="M511.500 420V366" stroke="#2222cc" strokeWidth="1.500" />
      <path d="M492.500 386.500l19 12 20-12" stroke="#2a2ab8" />
      <path d="M492.500 386.500V409l19-10.500" stroke="#12a012" />
      <path d="M510 419.500L463 393" stroke="#3fd03f" strokeWidth="1.500" />
      <path d="M531.500 386.500V409l-20-10.500" stroke="#d02a2a" />
      <path d="M513 419.500L557 394.500" stroke="#d82a2a" strokeWidth="1.500" />
    </g>
    <path d="M511.500 354l6 12c-2 2.500-10 2.500-12 0z" fill="#3a3ad8" />
    <path d="M454.500 388h12l-1 8-7.500 1.500z" fill="#1c9a1c" />
    <path d="M568.500 388h-13l3 8.500 6.500-.5z" fill="#a81c1c" />
    <path d="M505.500 420.500l6-3.500 6 3.500-6 3.500z" fill="#0d66be" stroke="#8c8775" strokeWidth=".8" />
    <path d="M508.500 470.500l7-2.500v8l-7 2.500z" fill="#1a86f4" stroke="#8c8775" strokeWidth=".8" />
  </Scene>
);

const ViewCube = () => (
  <CubeSvg width="120" height="100" viewBox="920 170 120 100" fontFamily={UI} textAnchor="middle" role="img" aria-label="ViewCube">
    <ellipse cx="981" cy="230" rx="47.500" ry="29" fill="none" stroke="#41464d" strokeWidth="11" />
    <g fill="#a9adb2" fontSize="14">
      <text transform="translate(945 256) rotate(-28) skewX(-24)">西</text>
      <text transform="translate(1020 256) rotate(28) skewX(24)">南</text>
      <text fontSize="12" transform="translate(949 210) rotate(28) skewX(24)">北</text>
      <text fontSize="12" transform="translate(1014 210) rotate(-28) skewX(-24)">东</text>
    </g>
    <g stroke="#4c4f52" strokeWidth=".8" strokeLinejoin="round">
      <path d="M981 175.500L1010 190l-28.500 17L952.500 189.500z" fill="#b4b7ba" />
      <path d="M952.500 189.500L981.500 207l-.5 33-27-18z" fill="#b9bcbf" />
      <path d="M1010 190l-1.500 32L981 240l.5-33z" fill="#adb0b3" />
    </g>
    <g fill="#3e4144" fontSize="14">
      <text transform="translate(978 186) rotate(150) skewX(-28)">后</text>
      <text transform="translate(967 217) skewY(30)">左</text>
      <text transform="translate(996 217) skewY(-30)">上</text>
    </g>
  </CubeSvg>
);

const Side = ({ h, names }: { h: number; names: string }) => (
  <Stack $h={h}>
    {names.split(' ').map(n => <Tool key={n} aria-label={n}><Icon name={n} /></Tool>)}
  </Stack>
);

const menus = ['文件(F)', '编辑(E)', '视图(V)', '插入(I)', '格式(O)', '工具(T)', '绘图(D)', '标注(N)', '修改(M)', '参数(P)', '窗口(W)', '帮助(H)'];

export default function App() {
  return (
    <Window>
      <Global />
      <GlassEdge />
      <Top>
        <AppButton aria-label="应用程序菜单">
          <svg width="23" height="28" viewBox="0 0 23 28" aria-hidden>
            <path d="M0 26L8 3l7-2 8 21-6 3-3-5-6 1-2 4z" fill="#d3242b" />
            <path d="M10 2.500L15 1l8 21-6 3z" fill="#94090f" />
            <path d="M0 26l5-1 8-18-5-4z" fill="#ee4b4e" />
            <path d="M9 16l5-1-2-5z" fill="#f7b6b6" />
          </svg>
          <Tri color="#222" w={5} />
        </AppButton>
        <TopRows>
          <TitleBar>
            {['new', 'open', 'save', 'saveas'].map(n => <QuickButton key={n} aria-label={n}><Icon name={n} size={15} /></QuickButton>)}
            <QuickButton $dim aria-label="web"><Icon name="web" size={15} /></QuickButton>
            <QuickButton $w={10} aria-label="更多"><SmallTri /></QuickButton>
            <QuickButton aria-label="print"><Icon name="print" size={15} /></QuickButton>
            <QuickButton aria-label="undo"><Icon name="undo" size={15} /></QuickButton>
            <QuickButton $w={10} aria-label="放弃列表"><SmallTri /></QuickButton>
            <QuickButton $dim aria-label="redo"><Icon name="redo" size={15} /></QuickButton>
            <QuickButton $w={13} aria-label="重做列表"><SmallTri /></QuickButton>
            <Select label="工作空间" value="AutoCAD 经典" w={155} pad={2}><Icon name="gear" size={15} /></Select>
            <QuickButton $w={13} aria-label="自定义"><Tri /></QuickButton>
            <Caption><span>AutoCAD 2013</span><span>Drawing1.dwg</span></Caption>
            <QuickButton $w={12} aria-label="展开搜索">
              <svg width="4" height="7" viewBox="0 0 4 7" aria-hidden><path d="M0 0v7l4-3.500z" fill="#111" /></svg>
            </QuickButton>
            <SearchBox aria-label="搜索" placeholder="键入关键字或短语" />
            <QuickButton aria-label="search"><Icon name="search" size={15} /></QuickButton>
            <QuickButton aria-label="user"><Icon name="user" size={15} /></QuickButton>
            <SignIn>登录</SignIn>
            <Push />
            <QuickButton $w={12} aria-label="登录列表"><SmallTri /></QuickButton>
            <QuickButton aria-label="exchange"><Icon name="exchange" size={15} /></QuickButton>
            <QuickButton aria-label="connect"><Icon name="connect" size={15} /></QuickButton>
            <QuickButton $w={10} aria-label="连接列表"><SmallTri /></QuickButton>
            <HelpGroup>
              <QuickButton aria-label="about"><Icon name="about" /></QuickButton>
              <QuickButton $w={12} aria-label="帮助列表"><SmallTri /></QuickButton>
            </HelpGroup>
            <WindowButtons>
              <button aria-label="最小化"><svg width="14" height="11" viewBox="0 0 14 11"><path d="M2.500 5.500h9v3h-9z" fill="#fff" stroke="#456" strokeWidth=".7" /></svg></button>
              <button aria-label="还原"><svg width="12" height="11" viewBox="0 0 12 11"><path d="M4 1.500h7v6H4z" fill="none" stroke="#fff" /><path d="M2 3h6.500v6.500H2z" fill="#456a94" stroke="#fff" strokeWidth="2" /></svg></button>
              <Push />
              <button aria-label="关闭"><svg width="14" height="11" viewBox="0 0 14 11"><path d="M3.500 1.500l7 8M10.500 1.500l-7 8" stroke="#fff" strokeWidth="2.500" /></svg></button>
            </WindowButtons>
          </TitleBar>
          <MenuBar>
            {menus.map(m => <MenuItem key={m}>{m}</MenuItem>)}
            <DocButtons>
              <button aria-label="最小化图形"><svg width="12" height="10" viewBox="0 0 12 10"><path d="M2 8h8" stroke="#222" strokeWidth="2" /></svg></button>
              <button aria-label="还原图形"><svg width="11" height="10" viewBox="0 0 11 10"><path d="M4 4V1.500h6.500V7H7.500M1 4h6.500v5H1z" fill="none" stroke="#222" strokeWidth="1.300" /></svg></button>
              <button aria-label="关闭图形"><svg width="9" height="10" viewBox="0 0 9 10"><path d="M1.500 2l6 7M7.500 2l-6 7" stroke="#222" strokeWidth="2" /></svg></button>
            </DocButtons>
          </MenuBar>
        </TopRows>
      </Top>

      <Docks>
        <Row>
          <Bar>
            <Grip />
            <Tools w={59} names="new open save" /><Divider />
            <Tools w={79} names="print preview publish dwf" /><Divider />
            <Tools w={98} names="cut copy paste match blockedit" /><Divider />
            <Group $w={62}>
              <QuickButton $w={20} aria-label="undo"><Icon name="undo" /></QuickButton>
              <QuickButton $w={11} aria-label="放弃列表"><Tri w={5} /></QuickButton>
              <QuickButton $w={20} $dim aria-label="redo"><Icon name="redo" /></QuickButton>
              <QuickButton $w={11} $dim aria-label="重做列表"><Tri w={5} /></QuickButton>
            </Group><Divider />
            <Tools w={79} names="pan zoomrt zoomwin zoomprev" /><Divider />
            <Tools w={118} names="properties dcenter palettes sheets markup calc" /><Divider />
            <Tools w={20} names="help" />
          </Bar>
          <Bar>
            <Grip />
            <Tools w={20} names="textstyle" /><Select label="文字样式" w={101} /><Divider $double />
            <Tools w={20} names="dimstyle" /><Select label="标注样式" w={101} /><Divider $double />
            <Tools w={20} names="tablestyle" /><Select label="表格样式" w={101} /><Divider $double />
            <Tools w={20} names="leaderstyle" /><Select label="多重引线样式" w={101} />
          </Bar>
        </Row>
        <Row>
          <Bar>
            <Grip />
            <Select label="当前工作空间" value="AutoCAD 经典" w={149} pad={7} />
            <Tools w={40} names="gear wssave" />
          </Bar>
          <Bar>
            <Grip />
            <Tools w={20} names="layerprops" />
            <Select label="图层" value="0" w={257} pad={1}>
              {['bulb', 'sun', 'freeze', 'lock', 'swatch'].map(n => <Icon key={n} name={n} size={14} />)}
            </Select>
            <Tools w={58} names="laycur layprev laystate" />
          </Bar>
          <Bar>
            <Grip />
            <ColorControl /><Divider $double />
            <Select label="线型" value="ByLayer" w={136} face="serif" pad={2}><LinePreview $w={47} /></Select><Divider $double />
            <Select label="线宽" value="ByLayer" w={106} face="serif" pad={2}><LinePreview $w={26} /></Select><Divider $double />
            <Select label="打印样式" value="BYCOLOR" w={101} face="mono" off pad={6} />
          </Bar>
        </Row>
        <Row>
          <Bar>
            <Grip />
            <Tools w={197} names="polysolid box wedge cone sphere cyl torus pyramid helix planar" /><Divider />
            <Tools w={98} names="extrude presspull sweep revolve loft" /><Divider />
            <Tools w={59} names="union subtract intersect" /><Divider />
            <Tools w={79} names="move3d rotate3d align3d array3d" />
          </Bar>
          <Bar>
            <Grip />
            <Tools w={59} names="union subtract intersect" /><Divider />
            <Tools w={158} names="faceext extrude faceext imprint shell faceext extrude imprint" /><Divider />
            <Tools w={79} names="filletedge chamferedge coledge colface" /><Divider />
            <Tools w={98} names="clean solidwarn separate shell check" />
          </Bar>
          <Bar>
            <Grip />
            <Tools w={20} names="vs2d" /><Divider />
            <Tools w={79} names="wire hidden real concept" /><Divider />
            <Tools w={20} names="vsmanage" />
          </Bar>
        </Row>
        <Row>
          <Bar>
            <Grip />
            <Tools w={20} names="namedview" /><Divider />
            <Tools w={118} names="vtop vbottom vleft vright vfront vback" /><Divider />
            <Tools w={79} names="isosw isose isone isonw" /><Divider />
            <Tools w={20} names="camera" /><Divider />
            <Tools w={20} names="ucsprev" />
            <Select label="视口比例" w={118} off />
          </Bar>
        </Row>
      </Docks>

      <Work>
        <SideDock>
          <Grip $wide />
          <Side h={374} names="line xline pline polygon rect arc circle cloud spline ellipse earc insblock mkblock point hatch gradient region table mtext addsel" />
        </SideDock>
        <Canvas>
          <Model />
          <ViewLabel>[−][西南等轴测][真实]</ViewLabel>
          <ViewCube />
          <UcsButton>未命名<Tri color="#b9bdc6" /></UcsButton>
        </Canvas>
        <Scroll>
          <Tri up color="#333" w={5} />
          <ScrollThumb />
        </Scroll>
        <SideDock $right>
          <Grip $wide />
          <Side h={338} names="erase copyobj mirror offset array move rotate scale stretch trim extend breakpt break join chamfer fillet blend explode" />
          <Grip $wide />
          <Side h={76} names="front1 front2 front3 front4" />
          <StackDivider />
          <Side h={38} names="bringtext hatchback" />
        </SideDock>
      </Work>
    </Window>
  );
}
